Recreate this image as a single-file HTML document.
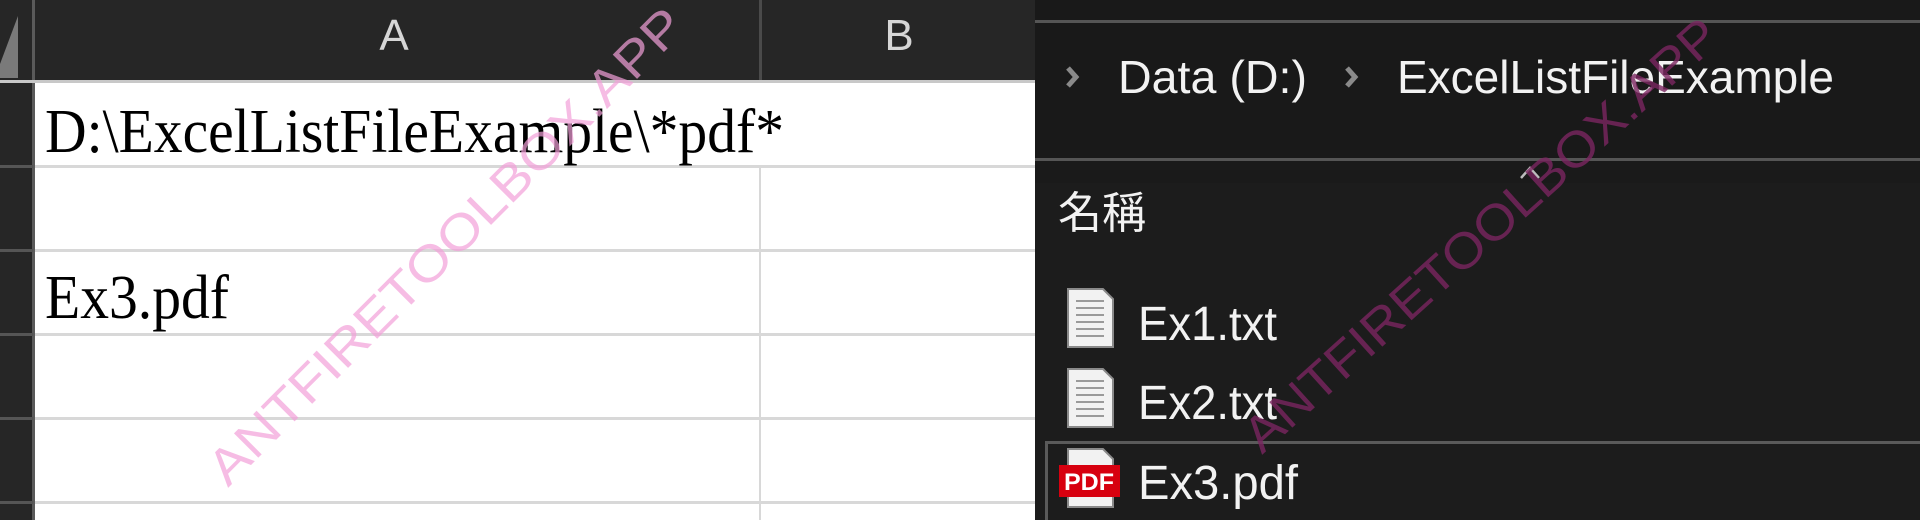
<!DOCTYPE html>
<html><head><meta charset="utf-8"><style>
html,body{margin:0;padding:0;width:1920px;height:520px;overflow:hidden;background:#1c1c1c}
svg{display:block}
</style></head><body>
<svg width="1920" height="520" viewBox="0 0 1920 520" xmlns="http://www.w3.org/2000/svg">
<rect x="0" y="0" width="1035" height="520" fill="#ffffff"/>
<rect x="0" y="0" width="1035" height="81" fill="#262626"/>
<rect x="0" y="0" width="33" height="520" fill="#262626"/>
<polygon points="0,78 18,78 18,16 0,64" fill="#7a7a7a"/>
<rect x="32" y="0" width="3" height="520" fill="#5a5a5a"/>
<rect x="759" y="0" width="3" height="81" fill="#4a4a4a"/>
<rect x="0" y="80" width="1035" height="3" fill="#c8c8c8"/>
<g fill="#d8d8d8">
<rect x="35" y="165" width="1000" height="3"/>
<rect x="35" y="249" width="1000" height="3"/>
<rect x="35" y="333" width="1000" height="3"/>
<rect x="35" y="417" width="1000" height="3"/>
<rect x="35" y="501" width="1000" height="3"/>
<rect x="759" y="168" width="2" height="352"/>
</g>
<g fill="#555">
<rect x="0" y="165" width="33" height="3"/><rect x="0" y="249" width="33" height="3"/>
<rect x="0" y="333" width="33" height="3"/><rect x="0" y="417" width="33" height="3"/>
<rect x="0" y="501" width="33" height="3"/>
</g>
<text x="394" y="50" font-family="Liberation Sans, sans-serif" font-size="44" fill="#d6d6d6" text-anchor="middle">A</text>
<text x="899" y="50" font-family="Liberation Sans, sans-serif" font-size="44" fill="#d6d6d6" text-anchor="middle">B</text>
<text x="45" y="152" font-family="Liberation Serif, serif" font-size="62" fill="#000" textLength="739" lengthAdjust="spacingAndGlyphs">D:\ExcelListFileExample\*pdf*</text>
<text x="45" y="318" font-family="Liberation Serif, serif" font-size="62" fill="#000" textLength="184" lengthAdjust="spacingAndGlyphs">Ex3.pdf</text>
<rect x="1035" y="0" width="885" height="520" fill="#1c1c1c"/>
<rect x="1035" y="0" width="885" height="160" fill="#191919"/>
<rect x="1035" y="20" width="885" height="3" fill="#555"/>
<rect x="1035" y="158" width="885" height="3" fill="#555"/>
<rect x="1035" y="161" width="885" height="22" fill="#1a1a1a"/>
<g stroke="#8a8a8a" stroke-width="5" fill="none">
<polyline points="1068,68 1076,77 1068,86"/>
<polyline points="1347,68 1355,77 1347,86"/>
</g>
<g stroke="#bdbdbd" stroke-width="2.5" fill="none"><polyline points="1521,178 1530,168 1539,178"/></g>
<g font-family="Liberation Sans, sans-serif" fill="#f2f2f2">
<text x="1118" y="93" font-size="46" textLength="189" lengthAdjust="spacingAndGlyphs">Data (D:)</text>
<text x="1397" y="93" font-size="46" textLength="437" lengthAdjust="spacingAndGlyphs">ExcelListFileExample</text>
<text x="1058" y="228" font-size="44" font-family="Liberation Sans, Noto Sans CJK TC, sans-serif">名稱</text>
<text x="1138" y="340" font-size="48" textLength="139" lengthAdjust="spacingAndGlyphs">Ex1.txt</text>
<text x="1138" y="419" font-size="48" textLength="139" lengthAdjust="spacingAndGlyphs">Ex2.txt</text>
<text x="1138" y="499" font-size="48" textLength="160" lengthAdjust="spacingAndGlyphs">Ex3.pdf</text>
</g>
<rect x="1045" y="441" width="880" height="3" fill="#5a5a5a"/>
<rect x="1045" y="441" width="3" height="79" fill="#5a5a5a"/>
<g>
<path d="M1068 289 H1103 L1113 299 V347 H1068 Z" fill="#f2f2f2" stroke="#8a8a8a" stroke-width="2"/>
<g fill="#9a9a9a"><rect x="1076" y="300" width="28" height="2"/><rect x="1076" y="307" width="28" height="2"/><rect x="1076" y="314" width="28" height="2"/><rect x="1076" y="321" width="28" height="2"/><rect x="1076" y="328" width="28" height="2"/><rect x="1076" y="335" width="28" height="2"/></g>
<path d="M1068 369 H1103 L1113 379 V427 H1068 Z" fill="#f2f2f2" stroke="#8a8a8a" stroke-width="2"/>
<g fill="#9a9a9a"><rect x="1076" y="380" width="28" height="2"/><rect x="1076" y="387" width="28" height="2"/><rect x="1076" y="394" width="28" height="2"/><rect x="1076" y="401" width="28" height="2"/><rect x="1076" y="408" width="28" height="2"/><rect x="1076" y="415" width="28" height="2"/></g>
<path d="M1068 449 H1103 L1113 459 V507 H1068 Z" fill="#f2f2f2" stroke="#8a8a8a" stroke-width="2"/>
<rect x="1059" y="465" width="61" height="32" fill="#d7000f"/>
<text x="1089" y="490" font-family="Liberation Sans, sans-serif" font-weight="bold" font-size="24" fill="#fff" text-anchor="middle" textLength="50" lengthAdjust="spacingAndGlyphs">PDF</text>
</g>
<text x="0" y="0" transform="translate(228,488) rotate(-45)" font-family="Liberation Sans, sans-serif" font-size="50" fill="#f2a0d8" fill-opacity="0.7" textLength="650" lengthAdjust="spacingAndGlyphs">ANTFIRETOOLBOX.APP</text>
<text x="0" y="0" transform="translate(1262,455) rotate(-42)" font-family="Liberation Sans, sans-serif" font-size="50" fill="#7a2560" fill-opacity="0.8" textLength="620" lengthAdjust="spacingAndGlyphs">ANTFIRETOOLBOX.APP</text>
</svg>
</body></html>
